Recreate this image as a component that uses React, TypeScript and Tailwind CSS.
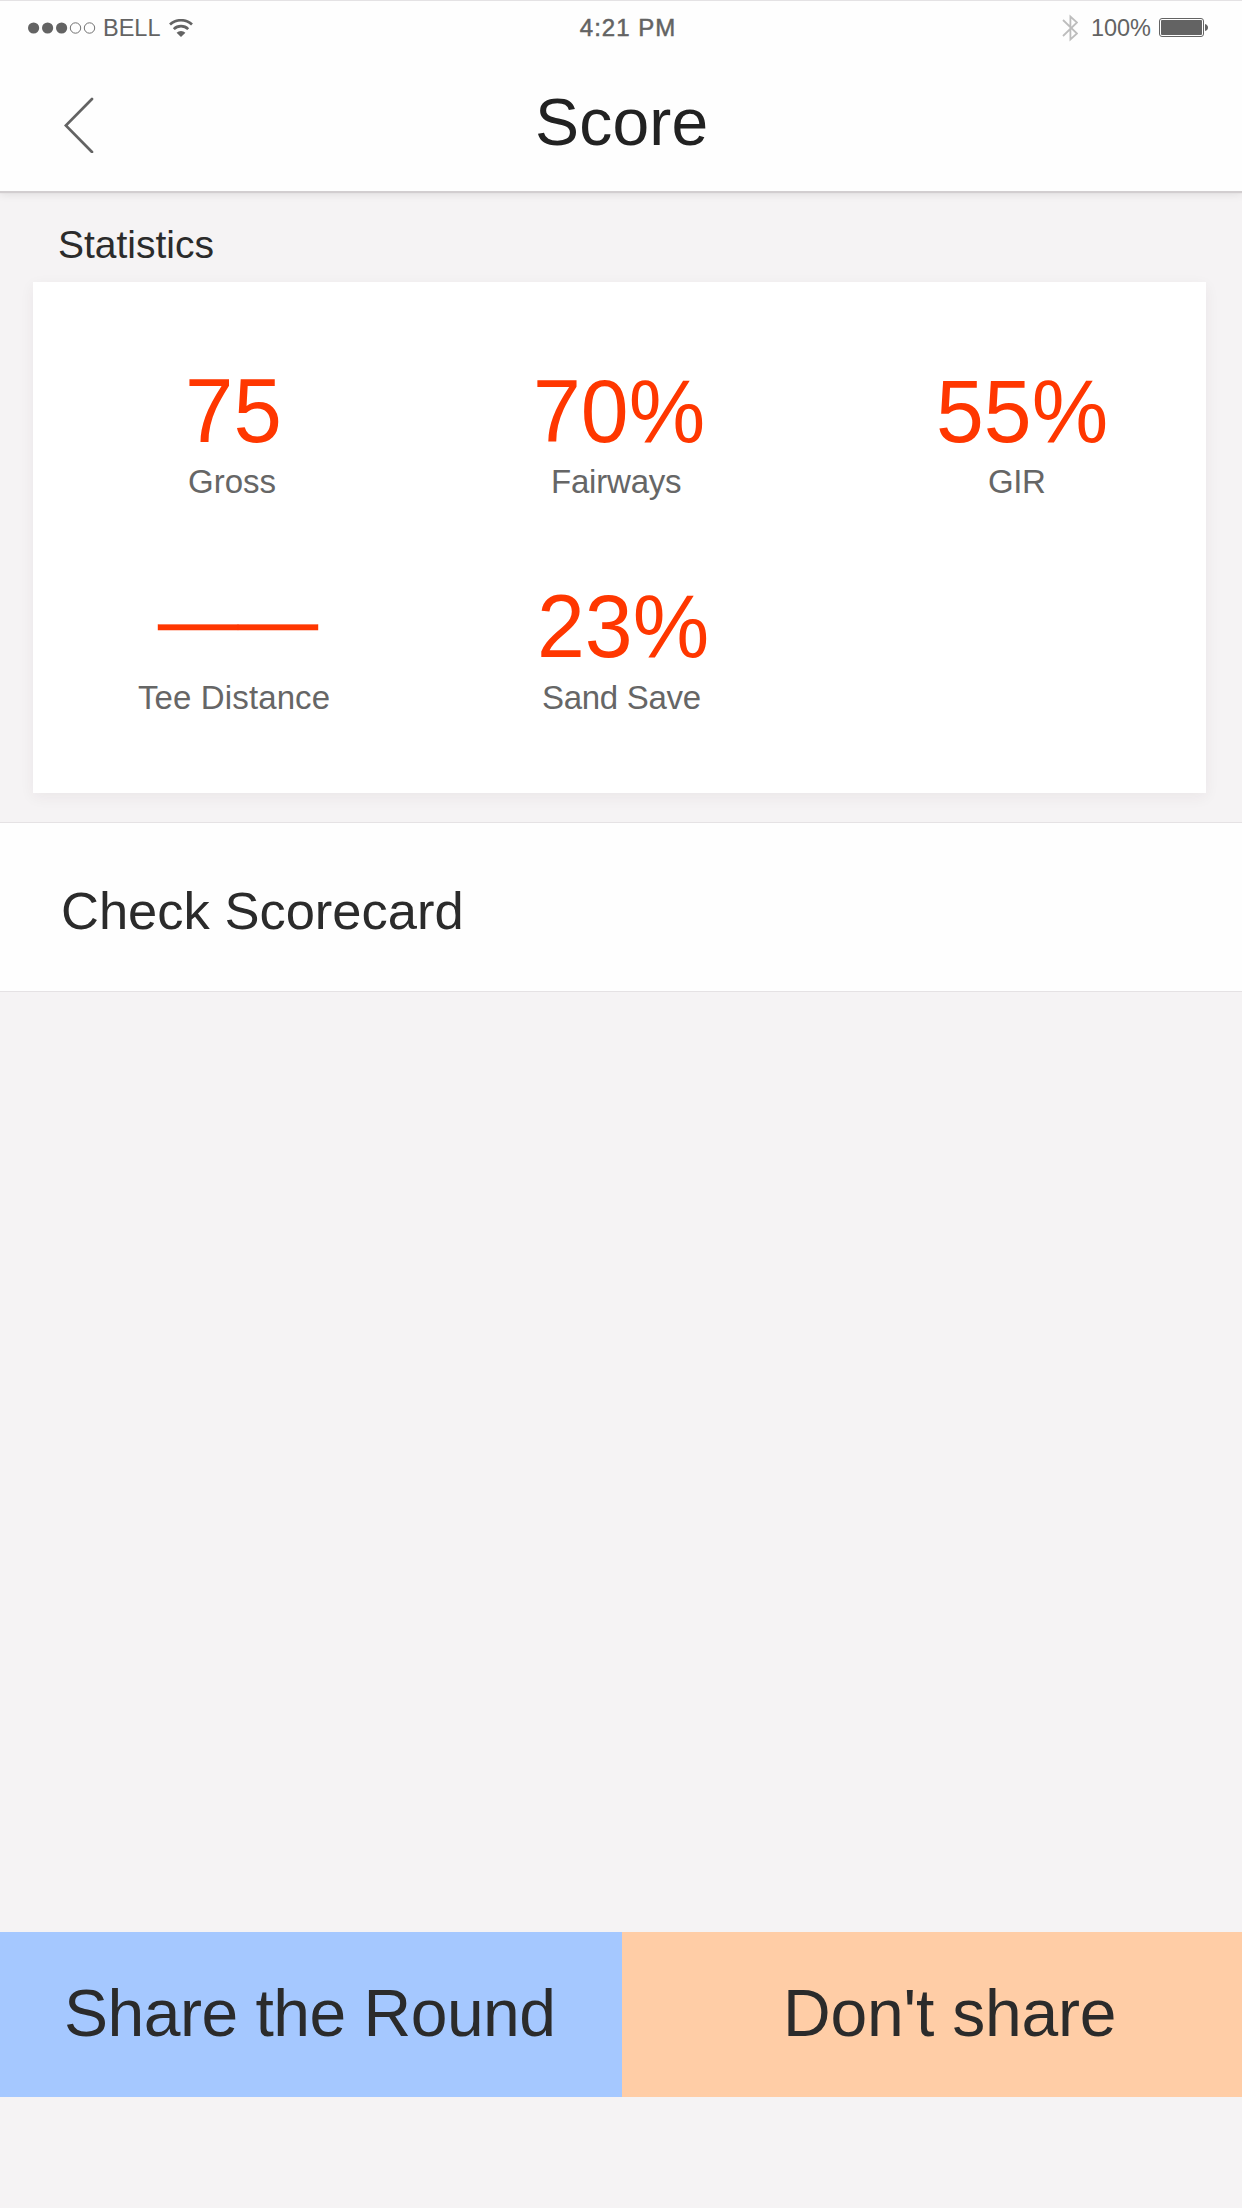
interface Stat {
    label: string;
    value: string;
    valueClass: string;
    labelClass: string;
}

const stats: Stat[] = [
    { label: 'Gross', value: '75', valueClass: 'ml-[152px] text-[87px] leading-[94px]', labelClass: 'ml-[155px]' },
    { label: 'Fairways', value: '70%', valueClass: 'ml-[112px] text-[86px] leading-[94px]', labelClass: 'ml-[130px] tracking-[-0.2px]' },
    { label: 'GIR', value: '55%', valueClass: 'ml-[127px] text-[86px] leading-[94px]', labelClass: 'ml-[179px] tracking-[-0.4px]' },
    { label: 'Tee Distance', value: '——', valueClass: 'ml-[125px] text-[80px] leading-[80px] [-webkit-text-stroke:0.4px_#ff3700]', labelClass: 'ml-[105px] tracking-[0.12px]' },
    { label: 'Sand Save', value: '23%', valueClass: 'ml-[116px] text-[86px] leading-[92px]', labelClass: 'ml-[121px] tracking-[-0.3px]' },
];

function StatusBar() {
    return (
        <div className="flex h-[54px] items-center justify-between border-t border-[#e4e2e4] pr-[33px] pl-7 text-[23.5px] leading-[54px] text-[#636363]">
            <div className="flex w-[400px] items-center">
                {/* Signal strength */}
                <svg width="68" height="12" viewBox="0 0 68 12">
                    <g fill="#636363">
                        <circle cx="5.6" cy="6" r="5.6" />
                        <circle cx="19.6" cy="6" r="5.6" />
                        <circle cx="33.6" cy="6" r="5.6" />
                    </g>
                    <g fill="none" stroke="#636363" strokeWidth="0.9">
                        <circle cx="47.5" cy="6" r="5.2" />
                        <circle cx="61.5" cy="6" r="5.2" />
                    </g>
                </svg>
                <span className="ml-[7px]">BELL</span>
                {/* Wi-Fi */}
                <svg className="ml-2" width="24" height="18" viewBox="0 0 24 18">
                    <g fill="none" stroke="#636363" strokeWidth="2.7">
                        <path d="M1 5.6 A16 16 0 0 1 23 5.6" />
                        <path d="M4.8 10.1 A10.4 10.4 0 0 1 19.2 10.1" />
                    </g>
                    <path d="M7.6 13.8 A6.6 6.6 0 0 1 16.4 13.8 L12 18 Z" fill="#636363" />
                </svg>
            </div>
            <span className="ml-[19px] text-[24px] tracking-[1px] [-webkit-text-stroke:0.5px_#636363]">4:21 PM</span>
            <div className="flex w-[400px] items-center justify-end">
                {/* Bluetooth */}
                <svg width="16" height="28" viewBox="0 0 16 28">
                    <path d="M1 6 L15 19.5 L8.4 25.5 V2.5 L15 8.5 L1 22" fill="none" stroke="#bdbdbd" strokeWidth="1.8" />
                </svg>
                <span className="ml-[13px]">100%</span>
                {/* Battery */}
                <svg className="ml-2" width="50" height="20" viewBox="0 0 50 20">
                    <rect x="0.5" y="0.5" width="44" height="18" rx="2.5" fill="none" stroke="#636363" />
                    <rect x="2" y="2" width="41" height="15" rx="1" fill="#636363" />
                    <path d="M46 6 Q49 7 49 9.5 Q49 12 46 13 Z" fill="#636363" />
                </svg>
            </div>
        </div>
    );
}

function StatItem({ stat }: { stat: Stat }) {
    return (
        <div className="h-[216px]">
            <div className="h-[94px] origin-[50%_78px] scale-y-[1.04] whitespace-nowrap text-[#ff3700]">
                <p className={stat.valueClass}>{stat.value}</p>
            </div>
            <div className="text-[33px] leading-[46px] whitespace-nowrap text-[#666]">
                <p className={stat.labelClass}>{stat.label}</p>
            </div>
        </div>
    );
}

export default function App() {
    return (
        <div className="flex h-[2208px] w-[1242px] flex-col bg-[#f5f3f4] font-['Liberation_Sans',Arial,sans-serif] text-[#2b2b2b]">
            <header className="relative h-[191px] bg-[#fefefe] shadow-[0_2px_1px_#d2ced0,0_4px_8px_rgba(0,0,0,0.08)]">
                <StatusBar />
                <div className="flex h-[137px] items-start px-16">
                    <button className="mt-[43px] w-[470px]" aria-label="Back">
                        <svg width="30" height="56" viewBox="0 0 30 56">
                            <path d="M28 2 L1.8 28.5 L28 55" fill="none" stroke="#636363" strokeWidth="2.7" strokeLinecap="round" />
                        </svg>
                    </button>
                    <h1 className="ml-px text-[66px] leading-[137px] tracking-[0.2px] text-[#222]">Score</h1>
                </div>
            </header>

            <section className="px-[33px] pb-[29px]">
                <h2 className="h-[91px] pl-[25px] text-[39px] leading-[107px]">Statistics</h2>
                <div className="grid h-[511px] w-[1173px] grid-cols-[388px_388px_1fr] content-start bg-white pt-[83px] shadow-[0_4px_14px_rgba(60,40,50,0.06)]">
                    {stats.map((stat) => (
                        <StatItem key={stat.label} stat={stat} />
                    ))}
                </div>
            </section>

            <button className="h-[170px] border-y border-[#e5e2e4] bg-[#fefefe] pl-[61px] text-left text-[52.5px] leading-[175px]">
                Check Scorecard
            </button>

            <footer className="mt-auto mb-[111px] flex h-[165px] text-[66px] leading-[162px]">
                <button className="flex w-[622px] items-start bg-[#a5c8ff] pl-[64px] tracking-[-0.5px]">Share the Round</button>
                <button className="flex flex-1 items-start bg-[#ffcda6] pl-[161px] tracking-[-0.2px]">Don't share</button>
            </footer>
        </div>
    );
}
